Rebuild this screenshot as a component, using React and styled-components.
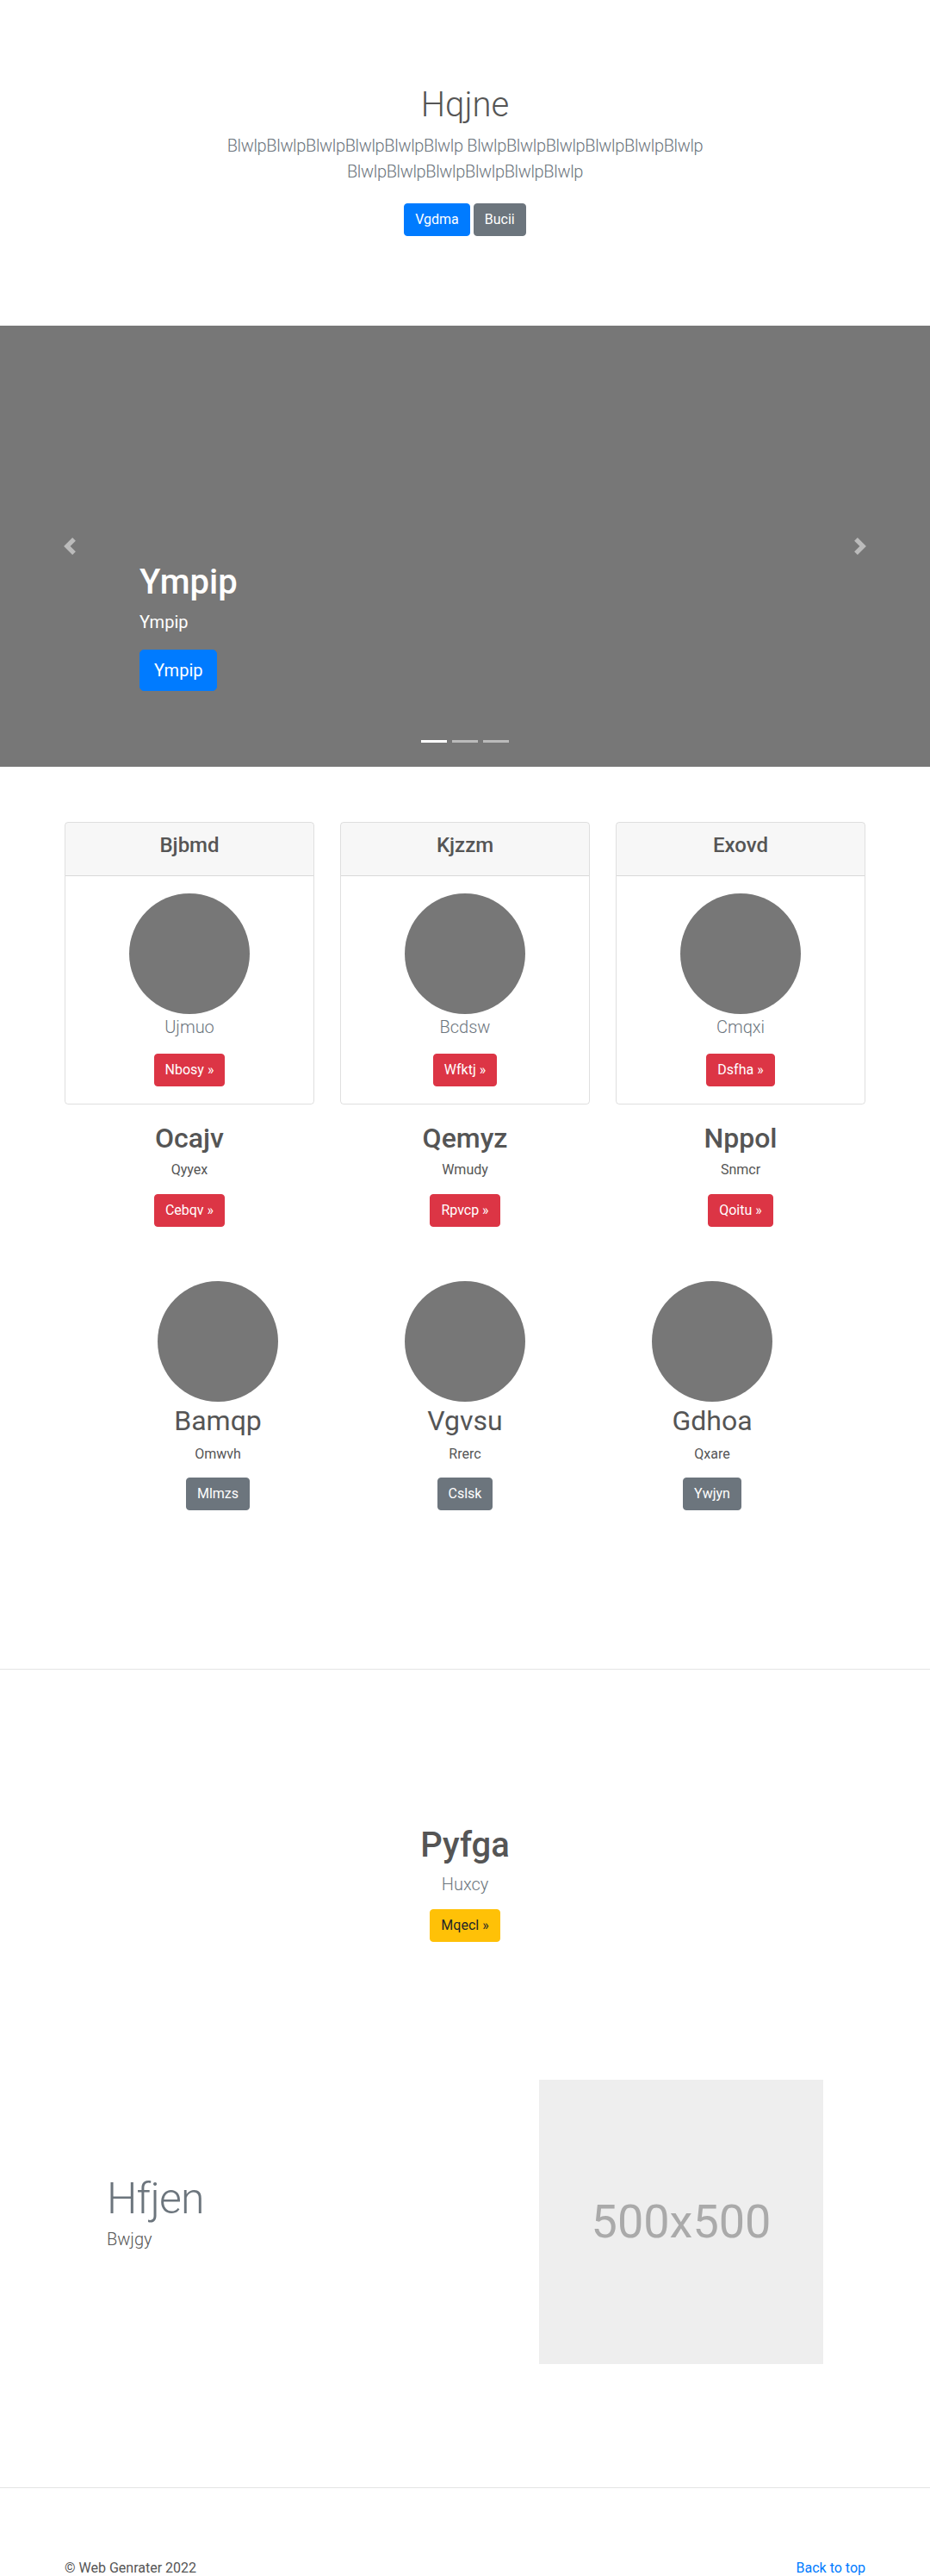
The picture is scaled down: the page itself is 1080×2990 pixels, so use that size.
import React from 'react';
import styled, { createGlobalStyle } from 'styled-components';

const colors = {
  text: '#555',
  muted: '#6c757d',
  placeholder: '#777',
  border: 'rgba(0, 0, 0, 0.125)',
  divider: 'rgba(0, 0, 0, 0.1)',
  link: '#007bff',
};

const variants = {
  primary: { bg: '#007bff', fg: '#fff' },
  secondary: { bg: '#6c757d', fg: '#fff' },
  danger: { bg: '#dc3545', fg: '#fff' },
  warning: { bg: '#ffc107', fg: '#212529' },
};

const GlobalStyle = createGlobalStyle`
  *, *::before, *::after {
    box-sizing: border-box;
  }

  body {
    margin: 0;
    font-family: "Segoe UI", Roboto, "Helvetica Neue", Arial, "Noto Sans", sans-serif;
    font-size: 16px;
    line-height: 1.5;
    color: ${colors.text};
    background: #fff;
  }
`;

const Button = styled.a`
  display: inline-block;
  padding: ${({ $lg }) => ($lg ? '8px 16px' : '6px 12px')};
  font-size: ${({ $lg }) => ($lg ? '20px' : '16px')};
  line-height: 1.5;
  font-weight: 400;
  border-radius: ${({ $lg }) => ($lg ? '5px' : '4px')};
  border: 1px solid ${({ $variant }) => variants[$variant].bg};
  background-color: ${({ $variant }) => variants[$variant].bg};
  color: ${({ $variant }) => variants[$variant].fg};
  text-decoration: none;
  white-space: nowrap;
  cursor: pointer;
`;

const Lead = styled.p`
  margin: ${({ $m }) => $m || '0'};
  font-size: 20px;
  font-weight: 300;
  line-height: 1.5;
  color: ${({ $muted }) => ($muted ? colors.muted : colors.text)};
`;

/* hero */

const Hero = styled.section`
  padding: 98px 15px 104px;
  text-align: center;
`;

const HeroTitle = styled.h1`
  margin: 0 0 8px;
  font-size: 40px;
  font-weight: 300;
  line-height: 1.2;
`;

const HeroLead = styled(Lead)`
  max-width: 610px;
  margin: 0 auto;
  letter-spacing: -0.35px;
`;

const ButtonRow = styled.div`
  display: flex;
  justify-content: center;
  gap: 4px;
  margin-top: 22px;
`;

/* carousel */

const Carousel = styled.div`
  position: relative;
  height: 512px;
  background-color: ${colors.placeholder};
  overflow: hidden;
`;

const Control = styled.a`
  position: absolute;
  top: 0;
  bottom: 0;
  ${({ $side }) => $side}: 0;
  width: 15%;
  display: flex;
  align-items: center;
  justify-content: center;
  opacity: 0.5;
`;

const Caption = styled.div`
  position: absolute;
  left: 15%;
  right: 15%;
  bottom: 88px;
  display: flex;
  flex-direction: column;
  align-items: flex-start;
  color: #fff;
`;

const CaptionTitle = styled.h1`
  margin: 0;
  font-size: 40px;
  font-weight: 500;
  line-height: 1.2;
`;

const CaptionText = styled.p`
  margin: 7px 0 17px;
  font-size: 20px;
  line-height: 1.5;
`;

const Indicators = styled.ol`
  position: absolute;
  left: 0;
  right: 0;
  bottom: 28px;
  display: flex;
  justify-content: center;
  margin: 0;
  padding: 0;
  list-style: none;
`;

const Indicator = styled.li`
  width: 30px;
  height: 3px;
  margin: 0 3px;
  background-color: #fff;
  opacity: ${({ $active }) => ($active ? 1 : 0.5)};
`;

const Chevron = ({ dir }) => (
  <svg width="20" height="20" viewBox="0 0 8 8" fill="#fff">
    {dir === 'prev'
      ? <path d="M5.25 0l-4 4 4 4 1.5-1.5L4.25 4l2.5-2.5L5.25 0z" />
      : <path d="M2.75 0l-1.5 1.5L3.75 4l-2.5 2.5L2.75 8l4-4-4-4z" />}
  </svg>
);

/* cards */

const Container = styled.div`
  width: ${({ $w }) => $w || 930}px;
  margin: ${({ $mt }) => $mt || 0}px auto 0;
`;

const Grid = styled.div`
  display: grid;
  grid-template-columns: repeat(3, 1fr);
  column-gap: ${({ $gap }) => $gap || 0}px;
`;

const Column = styled.div`
  display: flex;
  flex-direction: column;
  align-items: center;
  text-align: center;
`;

const Card = styled.div`
  width: 100%;
  border: 1px solid ${colors.border};
  border-radius: 4px;
  overflow: hidden;
  text-align: center;
`;

const CardHeader = styled.div`
  padding: 12px 20px;
  background-color: rgba(0, 0, 0, 0.03);
  border-bottom: 1px solid ${colors.border};
`;

const CardTitle = styled.h4`
  margin: 0 0 8px;
  font-size: 24px;
  font-weight: 500;
  line-height: 1.2;
`;

const CardBody = styled.div`
  padding: 20px;
  display: flex;
  flex-direction: column;
  align-items: center;
`;

const Avatar = styled.div`
  width: 140px;
  height: 140px;
  flex-shrink: 0;
  border-radius: 50%;
  background-color: ${colors.placeholder};
`;

const FeatureTitle = styled.h2`
  margin: ${({ $m }) => $m};
  font-size: 32px;
  font-weight: ${({ $weight }) => $weight || 500};
  line-height: 1.2;
`;

const Text = styled.p`
  margin: 0 0 ${({ $mb }) => $mb || 16}px;
  font-size: 16px;
  line-height: 1.5;
`;

const Divider = styled.hr`
  margin: ${({ $mt }) => $mt}px 0 0;
  border: 0;
  border-top: 1px solid ${colors.divider};
`;

/* call to action */

const Cta = styled.section`
  padding-top: 180px;
  text-align: center;
`;

const CtaTitle = styled.h1`
  margin: 0 0 6px;
  font-size: 40px;
  font-weight: 500;
  line-height: 1.2;
`;

/* featurette */

const Featurette = styled.section`
  width: 832px;
  margin: 160px auto 0;
  display: flex;
  align-items: center;
`;

const FeaturetteText = styled.div`
  flex: 1;
`;

const FeaturetteHeading = styled.h2`
  margin: 0 0 7px;
  font-size: 50px;
  font-weight: 300;
  line-height: 1;
  letter-spacing: -0.8px;
  color: ${colors.muted};
`;

const Placeholder = styled.div`
  width: 330px;
  height: 330px;
  display: flex;
  align-items: center;
  justify-content: center;
  background-color: #eee;
  color: #aaa;
  font-size: 54px;
`;

/* footer */

const Footer = styled.footer`
  width: 930px;
  margin: 0 auto;
  padding: 81px 0 48px;
  display: flex;
  justify-content: space-between;
  font-size: 16px;
`;

const FooterLink = styled.a`
  color: ${colors.link};
  text-decoration: none;
`;

const cards = [
  { title: 'Bjbmd', name: 'Ujmuo', action: 'Nbosy', heading: 'Ocajv', text: 'Qyyex', more: 'Cebqv' },
  { title: 'Kjzzm', name: 'Bcdsw', action: 'Wfktj', heading: 'Qemyz', text: 'Wmudy', more: 'Rpvcp' },
  { title: 'Exovd', name: 'Cmqxi', action: 'Dsfha', heading: 'Nppol', text: 'Snmcr', more: 'Qoitu' },
];

const people = [
  { name: 'Bamqp', text: 'Omwvh', action: 'Mlmzs' },
  { name: 'Vgvsu', text: 'Rrerc', action: 'Cslsk' },
  { name: 'Gdhoa', text: 'Qxare', action: 'Ywjyn' },
];

const blurb = 'BlwlpBlwlpBlwlpBlwlpBlwlpBlwlp';

const App = () => (
  <>
    <GlobalStyle />

    <Hero>
      <HeroTitle>Hqjne</HeroTitle>
      <HeroLead $muted>
        {blurb} {blurb} {blurb}
      </HeroLead>
      <ButtonRow>
        <Button $variant="primary">Vgdma</Button>
        <Button $variant="secondary">Bucii</Button>
      </ButtonRow>
    </Hero>

    <Carousel>
      <Control $side="left"><Chevron dir="prev" /></Control>
      <Control $side="right"><Chevron dir="next" /></Control>
      <Caption>
        <CaptionTitle>Ympip</CaptionTitle>
        <CaptionText>Ympip</CaptionText>
        <Button $variant="primary" $lg>Ympip</Button>
      </Caption>
      <Indicators>
        <Indicator $active />
        <Indicator />
        <Indicator />
      </Indicators>
    </Carousel>

    <Container $mt={64}>
      <Grid $gap={30}>
        {cards.map((c) => (
          <Column key={c.title}>
            <Card>
              <CardHeader>
                <CardTitle>{c.title}</CardTitle>
              </CardHeader>
              <CardBody>
                <Avatar />
                <Lead $muted $m="0 0 16px">{c.name}</Lead>
                <Button $variant="danger">{c.action} &raquo;</Button>
              </CardBody>
            </Card>
            <FeatureTitle $m="20px 0 6px">{c.heading}</FeatureTitle>
            <Text>{c.text}</Text>
            <Button $variant="danger">{c.more} &raquo;</Button>
          </Column>
        ))}
      </Grid>
    </Container>

    <Container $w={861} $mt={63}>
      <Grid>
        {people.map((p) => (
          <Column key={p.name}>
            <Avatar />
            <FeatureTitle $weight={400} $m="3px 0 7px">{p.name}</FeatureTitle>
            <Text $mb={15}>{p.text}</Text>
            <Button $variant="secondary">{p.action}</Button>
          </Column>
        ))}
      </Grid>
    </Container>

    <Divider $mt={184} />

    <Cta>
      <CtaTitle>Pyfga</CtaTitle>
      <Lead $muted $m="0 0 14px">Huxcy</Lead>
      <Button $variant="warning">Mqecl &raquo;</Button>
    </Cta>

    <Featurette>
      <FeaturetteText>
        <FeaturetteHeading>Hfjen</FeaturetteHeading>
        <Lead $m="0 0 16px">Bwjgy</Lead>
      </FeaturetteText>
      <Placeholder>500x500</Placeholder>
    </Featurette>

    <Divider $mt={143} />

    <Footer>
      <span>&copy; Web Genrater 2022</span>
      <FooterLink href="#">Back to top</FooterLink>
    </Footer>
  </>
);

export default App;
